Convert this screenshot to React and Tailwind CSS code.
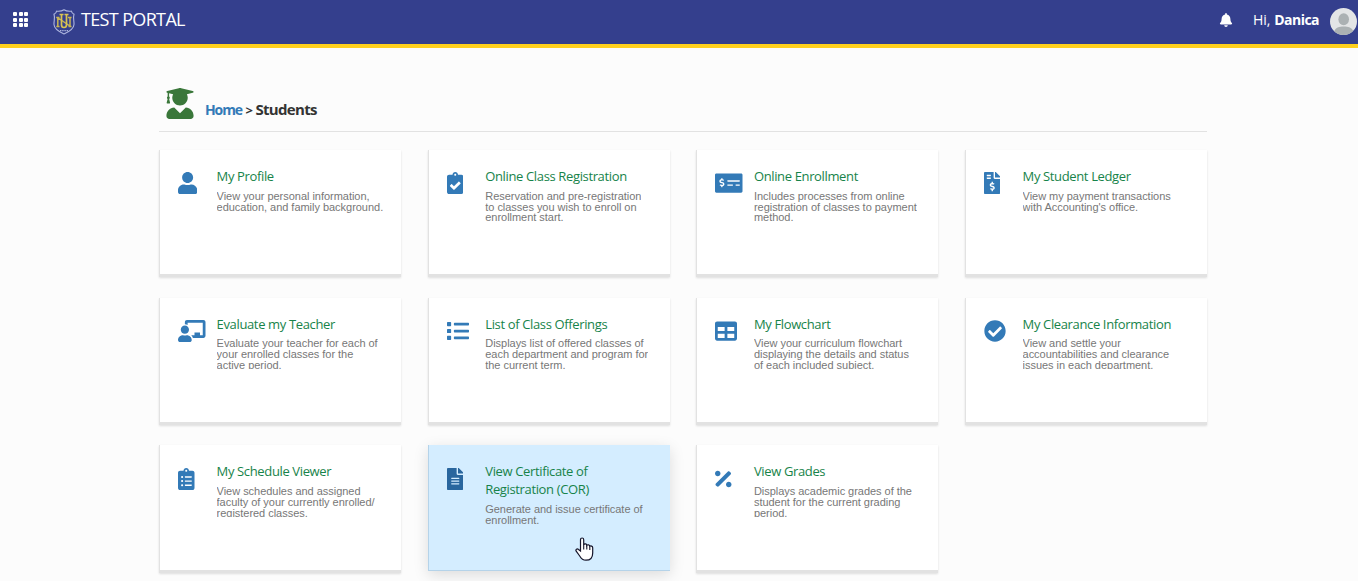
import {
  FaBell,
  FaChalkboardTeacher,
  FaCheckCircle,
  FaClipboardCheck,
  FaClipboardList,
  FaFileAlt,
  FaFileInvoiceDollar,
  FaList,
  FaMoneyCheckAlt,
  FaPercentage,
  FaTable,
  FaUser,
  FaUserGraduate,
} from "react-icons/fa";

const modules = [
  {
    icon: FaUser,
    size: "w-[19.25px]",
    title: "My Profile",
    text: "View your personal information,\neducation, and family background.",
  },
  {
    icon: FaClipboardCheck,
    size: "w-[16.5px]",
    title: "Online Class Registration",
    text: "Reservation and pre-registration\nto classes you wish to enroll on\nenrollment start.",
  },
  {
    icon: FaMoneyCheckAlt,
    size: "w-[27.5px]",
    title: "Online Enrollment",
    text: "Includes processes from online\nregistration of classes to payment\nmethod.",
  },
  {
    icon: FaFileInvoiceDollar,
    size: "w-[16.5px]",
    title: "My Student Ledger",
    text: "View my payment transactions\nwith Accounting's office.",
  },
  {
    icon: FaChalkboardTeacher,
    size: "w-[27.5px]",
    title: "Evaluate my Teacher",
    text: "Evaluate your teacher for each of\nyour enrolled classes for the\nactive period.",
  },
  {
    icon: FaList,
    size: "w-[22px]",
    title: "List of Class Offerings",
    text: "Displays list of offered classes of\neach department and program for\nthe current term.",
  },
  {
    icon: FaTable,
    size: "w-[22px]",
    title: "My Flowchart",
    text: "View your curriculum flowchart\ndisplaying the details and status\nof each included subject.",
  },
  {
    icon: FaCheckCircle,
    size: "w-[22px]",
    title: "My Clearance Information",
    text: "View and settle your\naccountabilities and clearance\nissues in each department.",
  },
  {
    icon: FaClipboardList,
    size: "w-[16.5px]",
    title: "My Schedule Viewer",
    text: "View schedules and assigned\nfaculty of your currently enrolled/\nregistered classes.",
  },
  {
    icon: FaFileAlt,
    size: "w-[16.5px]",
    title: "View Certificate of\nRegistration (COR)",
    text: "Generate and issue certificate of\nenrollment.",
    active: true,
  },
  {
    icon: FaPercentage,
    size: "w-[16.5px]",
    title: "View Grades",
    text: "Displays academic grades of the\nstudent for the current grading\nperiod.",
  },
];

function Crest() {
  return (
    <svg width="22" height="26" viewBox="0 0 22 26" fill="none">
      <path
        d="M11 .8C9 2.2 6.500 2.500 3.500 2.200 3.300 3.700 2.500 4.700 1 5.200 2.200 8.500.8 12 1 15.500c.2 4.200 3.500 6.600 10 9.500 6.500-2.900 9.800-5.300 10-9.500.2-3.500-1.200-7 0-10.300-1.500-.5-2.300-1.500-2.500-3C15.500 2.500 13 2.200 11 .8Z"
        stroke="#aeb6df"
        strokeWidth="1.100"
      />
      <path d="M3.200 8.500h3.300M4.800 8.500v9M3.300 17.500h3.200M15 8.500h3.600M17 8.500v9M15.500 17.500h3M5.200 9l11.600 8" stroke="#c9b653" strokeWidth="1.500" />
      <path d="M6.500 5.500h4M11.500 5.500h4M8.500 5.500v10.300c0 3.600 5 3.600 5 0V5.500" stroke="#d9c452" strokeWidth="1.700" />
      <path d="M7 21.700h8" stroke="#aeb6df" strokeWidth="1.200" strokeDasharray="1.400 .8" />
    </svg>
  );
}

function Header() {
  return (
    <header className="flex h-12 items-start justify-between border-b-4 border-[#ffd01e] bg-[#343f8d] font-['Open_Sans',sans-serif] text-white">
      <div className="flex items-start">
        <div className="mt-3 ml-[13px] grid grid-cols-3 gap-[1.5px]">
          {Array.from({ length: 9 }, (_, i) => (
            <span key={i} className="size-[4px] rounded-[1px] bg-white" />
          ))}
        </div>
        <div className="mt-[9px] ml-[25px]">
          <Crest />
        </div>
        <span className="mt-[6px] ml-[6px] text-[18px] leading-[26px] tracking-[-0.65px]">TEST PORTAL</span>
      </div>
      <div className="flex items-start">
        <FaBell className="mt-[13px] size-[14px]" />
        <span className="mt-[10px] ml-[20px] w-[77px] text-[14px] leading-5 whitespace-nowrap">
          Hi, <b className="tracking-[-0.5px]">Danica</b>
        </span>
        <svg className="mt-2" width="28" height="27" viewBox="0 0 28 27">
          <clipPath id="avatar">
            <circle cx="13.500" cy="13.500" r="13.500" />
          </clipPath>
          <g clipPath="url(#avatar)">
            <rect width="28" height="27" fill="#e3e5e6" />
            <ellipse cx="13.700" cy="11.200" rx="5.300" ry="6" fill="#abb1b3" />
            <path d="M4 24c1-4.500 5.500-5.500 9.700-5.500S22.500 19.500 23.500 24v4H4Z" fill="#abb1b3" />
          </g>
        </svg>
      </div>
    </header>
  );
}

function HandCursor() {
  return (
    <svg className="absolute top-[92px] left-[146px]" width="19" height="24" viewBox="0 0 19 24">
      <path
        d="M5.500 14V2.700c0-2.300 3.200-2.300 3.200 0v5.200c.5-1.400 3-1.300 3.100.5.700-1.100 2.900-.7 3 .9.900-.7 2.900-.3 2.900 1.500v5.100c0 4.300-2.300 7.300-6.700 7.300-3.300 0-4.800-1.500-6.300-4.200L1.200 14.200c-1-1.800 1-3 2.300-1.700Z"
        fill="white"
        stroke="#15152b"
        strokeWidth="1.200"
      />
      <path d="M8.700 7.500v5M11.800 8.500v4M14.800 9.500v3.500" stroke="#15152b" strokeWidth="1.100" />
    </svg>
  );
}

function Card({ icon: Icon, size, title, text, active }) {
  const look = active
    ? "border-[#b5d3e9] border-b bg-[#d4edff] shadow-[0_4px_14px_rgba(0,0,0,0.13)]"
    : "border-[#e2e2e2] border-b-[3px] bg-white shadow-[0_1px_2px_rgba(0,0,0,0.12)]";

  return (
    <div className={`relative flex border-l pt-[17px] pl-[18px] ${active ? "h-[126px]" : "h-[127.3px]"} ${look}`}>
      <div className={`w-[38.6px] shrink-0 pt-[5.2px] ${active ? "text-[#29669e]" : "text-[#337ab7]"}`}>
        <Icon className={`h-[22px] ${size}`} />
      </div>
      <div className="min-w-0">
        <h2 className="font-['Open_Sans',sans-serif] text-[13px] leading-[18px] tracking-[-0.36px] whitespace-pre text-[#17834a]">
          {title}
        </h2>
        <p className="mt-[5.8px] h-[31px] overflow-hidden font-['Liberation_Sans',sans-serif] text-[11px] leading-[10.7px] tracking-[-0.03px] whitespace-pre text-[#777]">
          {text}
        </p>
      </div>
      {active ? <HandCursor /> : null}
    </div>
  );
}

export default function App() {
  return (
    <div className="h-[581px] overflow-hidden bg-[#fcfcfc]">
      <Header />
      <main className="ml-[159px] w-[1048px] pt-10">
        <div className="flex h-11 items-start border-b border-[#e2e2e2]">
          <FaUserGraduate className="ml-[7px] h-[31px] w-7 text-[#3a773a]" />
          <h1 className="mt-[11px] ml-[11px] font-['Open_Sans',sans-serif] text-[14px] leading-5 font-bold text-[#333]">
            <a className="tracking-[-1.1px] text-[#337ab7]">Home</a>
            <span className="mr-[3px] ml-[3.5px] inline-block w-[7px] text-[13px]">&gt;</span>
            <span className="text-[15px] tracking-[-0.7px]">Students</span>
          </h1>
        </div>
        <div className="mt-[18px] grid grid-cols-[repeat(4,242px)] justify-between gap-y-[20.37px]">
          {modules.map((m) => (
            <Card key={m.title} {...m} />
          ))}
        </div>
      </main>
    </div>
  );
}
